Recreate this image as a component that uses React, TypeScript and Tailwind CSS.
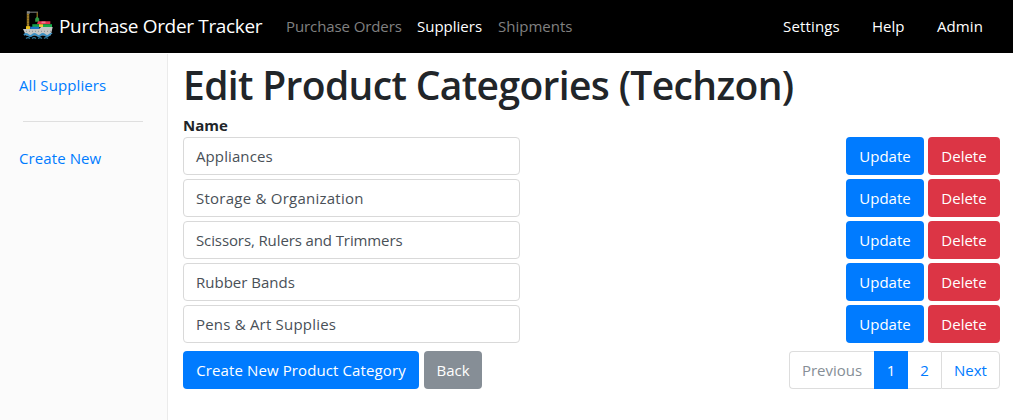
import React from "react";

const categories = [
  { name: "Appliances", tracking: "tracking-[0.1px]" },
  { name: "Storage & Organization", tracking: "tracking-[0.24px]" },
  { name: "Scissors, Rulers and Trimmers", tracking: "tracking-[-0.11px]" },
  { name: "Rubber Bands", tracking: "tracking-[0px]" },
  { name: "Pens & Art Supplies", tracking: "tracking-[0.2px]" },
];

function ShipLogo() {
  return (
    <svg className="mt-px h-[30px] w-[30px] shrink-0" viewBox="0 0 30 30" fill="none">
      <path d="M5 16V2.5" stroke="#a5822a" strokeWidth="2.4" />
      <path d="M5 4v11" stroke="#5a4615" strokeWidth="0.9" strokeDasharray="1.3 1.3" />
      <path d="M4 1.2h11" stroke="#6e7172" strokeWidth="1.2" />
      <path d="M3.8 0.3h3v2.4h-3z" fill="#85898a" />
      <path d="M14.2 1.5V7" stroke="#b98f25" strokeWidth="1" />
      <path d="M12.2 10.8V7.8l2-2.2 2 2.2v3z" fill="#2f9a45" />
      <path d="M15 10.2h12.3v3H14z" fill="#e5314e" />
      <path d="M18.5 10.5h4v1.8h-4z" fill="#f07b8d" />
      <path d="M9.3 13.2h8V16h-8z" fill="#15a049" />
      <path d="M16 13.2h4V16h-4z" fill="#e9cf35" />
      <path d="M20 13.2h9V16.5h-9z" fill="#16ad4a" />
      <path d="M3 15.2h4.2v3H3z" fill="#ecc21b" />
      <path d="M7.2 15.7h9v3h-9z" fill="#1b74c7" />
      <path d="M0 18h16l2-2h11.7l-2 8.5H3z" fill="#c3c6c5" />
      <path d="M3 20.3h25" stroke="#868c8e" strokeDasharray="1 2" />
      <path d="M1 24q2-2 4.2 0t4.2 0 4.2 0 4.2 0 4.2 0 4.2 0 2.5-1" stroke="#3c91c4" strokeWidth="1.8" />
      <path d="M3 27.4q2-1.5 4 0m2 0q2-1.5 4 0m2 0q2-1.5 4 0m2 0q2-1.5 4 0" stroke="#2d7596" strokeWidth="1.2" />
    </svg>
  );
}

export default function App() {
  return (
    <div className="flex h-[420px] w-[1013px] flex-col overflow-hidden bg-white font-['Open_Sans','Noto_Sans',sans-serif] text-[15px] leading-6 whitespace-nowrap text-[#212529]">
      <header className="flex h-[53px] shrink-0 items-center bg-black pb-0.5 pl-[23px] text-white">
        <ShipLogo />
        <a className="ml-[6px] w-[227px] text-[19px] tracking-[-0.34px]">Purchase Order Tracker</a>
        <nav className="flex flex-1 text-[#808080]">
          <a className="w-[131px] tracking-[-0.1px]">Purchase Orders</a>
          <a className="w-[81px] text-white">Suppliers</a>
          <a>Shipments</a>
        </nav>
        <nav className="flex w-[230px]">
          <a className="w-[89px] tracking-[0.15px]">Settings</a>
          <a className="w-[65px]">Help</a>
          <a className="tracking-[0.1px]">Admin</a>
        </nav>
      </header>
      <div className="flex min-h-0 flex-1">
        <aside className="mt-px flex w-[168px] shrink-0 flex-col border-r border-[#ebebeb] bg-[#fbfbfb] pt-[19px] pl-[19px] text-[#007bff]">
          <a className="tracking-[0.1px]">All Suppliers</a>
          <hr className="mt-6 mb-6 ml-1 w-[120px] border-[#dfdfdf]" />
          <a className="tracking-[0.1px]">Create New</a>
        </aside>
        <main className="flex w-[832px] flex-col pl-[15px]">
          <h1 className="mt-2 h-12 text-[39px] leading-[48px] font-semibold tracking-[-0.64px]">Edit Product Categories (Techzon)</h1>
          <div className="mt-1 h-6 font-bold">Name</div>
          <div className="flex flex-col gap-1">
            {categories.map((category) => (
              <div key={category.name} className="flex h-[38px] justify-between">
                <div className={`w-[337px] rounded border border-[#d9d9d9] px-3 pt-[6px] text-[#495057] ${category.tracking}`}>
                  {category.name}
                </div>
                <div className="flex gap-1 text-white">
                  <button className="w-[78px] rounded bg-[#007bff]">Update</button>
                  <button className="w-[72px] rounded bg-[#dc3545]">Delete</button>
                </div>
              </div>
            ))}
          </div>
          <div className="mt-2 flex h-[38px]">
            <button className="w-[236px] rounded bg-[#007bff] tracking-[0.11px] text-white">Create New Product Category</button>
            <button className="ml-[5px] w-[58px] rounded bg-[#868e96] text-white">Back</button>
            <nav className="ml-auto flex rounded text-[#007bff]">
              <a className="flex w-[85px] items-center justify-center rounded-l border border-r-0 border-[#ddd] text-[#868e96]">Previous</a>
              <a className="flex w-[34px] items-center justify-center bg-[#007bff] text-white">1</a>
              <a className="flex w-[33px] items-center justify-center border-y border-[#ddd]">2</a>
              <a className="flex w-[59px] items-center justify-center rounded-r border border-[#ddd]">Next</a>
            </nav>
          </div>
        </main>
      </div>
    </div>
  );
}
